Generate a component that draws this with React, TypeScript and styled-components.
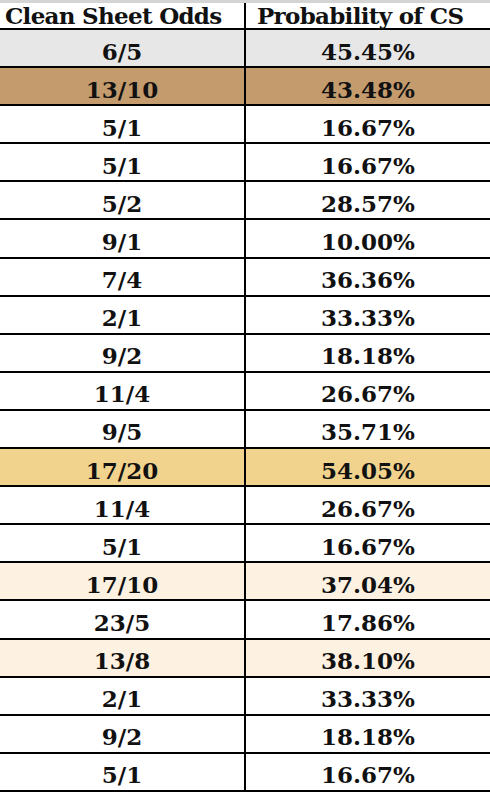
import React from 'react'
import styled, { createGlobalStyle } from 'styled-components'

const GlobalStyle = createGlobalStyle`
    html, body {
        margin: 0;
        padding: 0;
        background: #fff;
    }
    body {
        font-family: "DejaVu Serif", "Liberation Serif", serif;
        color: #111;
    }
`

type Tint = 'none' | 'grey' | 'brown' | 'gold' | 'cream'

const tints: Record<Tint, string> = {
    none: '#ffffff',
    grey: '#e7e7e7',
    brown: '#c39b6d',
    gold: '#f1d38d',
    cream: '#fdf2e1',
}

const rows: { odds: string; prob: string; tint: Tint }[] = [
    { odds: '6/5', prob: '45.45%', tint: 'grey' },
    { odds: '13/10', prob: '43.48%', tint: 'brown' },
    { odds: '5/1', prob: '16.67%', tint: 'none' },
    { odds: '5/1', prob: '16.67%', tint: 'none' },
    { odds: '5/2', prob: '28.57%', tint: 'none' },
    { odds: '9/1', prob: '10.00%', tint: 'none' },
    { odds: '7/4', prob: '36.36%', tint: 'none' },
    { odds: '2/1', prob: '33.33%', tint: 'none' },
    { odds: '9/2', prob: '18.18%', tint: 'none' },
    { odds: '11/4', prob: '26.67%', tint: 'none' },
    { odds: '9/5', prob: '35.71%', tint: 'none' },
    { odds: '17/20', prob: '54.05%', tint: 'gold' },
    { odds: '11/4', prob: '26.67%', tint: 'none' },
    { odds: '5/1', prob: '16.67%', tint: 'none' },
    { odds: '17/10', prob: '37.04%', tint: 'cream' },
    { odds: '23/5', prob: '17.86%', tint: 'none' },
    { odds: '13/8', prob: '38.10%', tint: 'cream' },
    { odds: '2/1', prob: '33.33%', tint: 'none' },
    { odds: '9/2', prob: '18.18%', tint: 'none' },
    { odds: '5/1', prob: '16.67%', tint: 'none' },
]

const App = () => {
    return (
        <>
            <GlobalStyle />
            <Sheet>
                <TopStrip />
                <HeaderRow>
                    <HeadCell>Clean Sheet Odds</HeadCell>
                    <HeadCell $pad={11}>Probability of CS</HeadCell>
                </HeaderRow>
                {rows.map((r, i) => (
                    <Row key={i} $tint={r.tint}>
                        <Cell>{r.odds}</Cell>
                        <Cell>{r.prob}</Cell>
                    </Row>
                ))}
            </Sheet>
        </>
    )
}

const Sheet = styled.div`
    width: 490px;
    height: 794px;
    overflow: hidden;
    background: #fff;
`

const TopStrip = styled.div`
    height: 3px;
    background: #d4d4d4;
`

const HeaderRow = styled.div`
    display: grid;
    grid-template-columns: 246px 1fr;
    height: 27px;
    box-sizing: border-box;
    border-bottom: 2px solid #000;
`

const HeadCell = styled.div<{ $pad?: number }>`
    display: flex;
    align-items: center;
    padding-left: ${p => p.$pad ?? 5}px;
    font-size: 23px;
    font-weight: 700;
    letter-spacing: -0.7px;
    line-height: 1;
    white-space: nowrap;
    &:first-child {
        border-right: 2px solid #000;
    }
`

const Row = styled.div<{ $tint: Tint }>`
    display: grid;
    grid-template-columns: 246px 1fr;
    height: 38.1px;
    box-sizing: border-box;
    border-bottom: 2px solid #000;
    background: ${p => tints[p.$tint]};
`

const Cell = styled.div`
    display: flex;
    align-items: center;
    justify-content: center;
    padding-top: 6px;
    box-sizing: border-box;
    font-size: 23px;
    font-weight: 700;
    line-height: 1;
    &:first-child {
        border-right: 2px solid #000;
    }
`

export default App
